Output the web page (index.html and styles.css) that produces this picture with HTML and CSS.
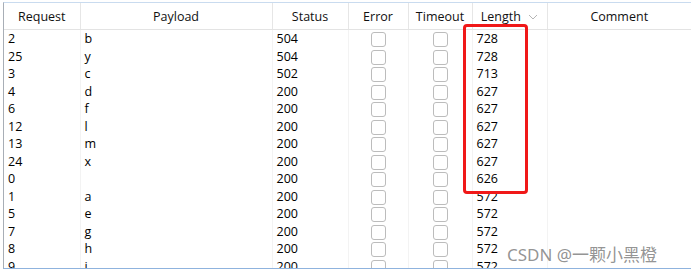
FILE: index.html
```html
<!DOCTYPE html>
<html lang="en">
<head>
    <meta charset="UTF-8">
    <title>Intruder results</title>
    <link rel="stylesheet" href="styles.css">
</head>
<body>
    <div class="results">
        <table class="grid">
            <colgroup>
                <col style="width: 76px">
                <col style="width: 192px">
                <col style="width: 76px">
                <col style="width: 60px">
                <col style="width: 64px">
                <col style="width: 75px">
                <col>
            </colgroup>
            <thead>
                <tr>
                    <th>Request</th>
                    <th>Payload</th>
                    <th>Status</th>
                    <th>Error</th>
                    <th>Timeout</th>
                    <th>Length <svg class="sort" width="10" height="6" viewBox="0 0 10 6"><path d="M1 1 L5 5 L9 1" fill="none" stroke="#b5b5b5" stroke-width="1"/></svg></th>
                    <th>Comment</th>
                </tr>
            </thead>
            <tbody>
                <tr><td>2</td><td>b</td><td>504</td><td class="chk"><span class="box"></span></td><td class="chk"><span class="box"></span></td><td>728</td><td></td></tr>
                <tr><td>25</td><td>y</td><td>504</td><td class="chk"><span class="box"></span></td><td class="chk"><span class="box"></span></td><td>728</td><td></td></tr>
                <tr><td>3</td><td>c</td><td>502</td><td class="chk"><span class="box"></span></td><td class="chk"><span class="box"></span></td><td>713</td><td></td></tr>
                <tr><td>4</td><td>d</td><td>200</td><td class="chk"><span class="box"></span></td><td class="chk"><span class="box"></span></td><td>627</td><td></td></tr>
                <tr><td>6</td><td>f</td><td>200</td><td class="chk"><span class="box"></span></td><td class="chk"><span class="box"></span></td><td>627</td><td></td></tr>
                <tr><td>12</td><td>l</td><td>200</td><td class="chk"><span class="box"></span></td><td class="chk"><span class="box"></span></td><td>627</td><td></td></tr>
                <tr><td>13</td><td>m</td><td>200</td><td class="chk"><span class="box"></span></td><td class="chk"><span class="box"></span></td><td>627</td><td></td></tr>
                <tr><td>24</td><td>x</td><td>200</td><td class="chk"><span class="box"></span></td><td class="chk"><span class="box"></span></td><td>627</td><td></td></tr>
                <tr><td>0</td><td></td><td>200</td><td class="chk"><span class="box"></span></td><td class="chk"><span class="box"></span></td><td>626</td><td></td></tr>
                <tr><td>1</td><td>a</td><td>200</td><td class="chk"><span class="box"></span></td><td class="chk"><span class="box"></span></td><td>572</td><td></td></tr>
                <tr><td>5</td><td>e</td><td>200</td><td class="chk"><span class="box"></span></td><td class="chk"><span class="box"></span></td><td>572</td><td></td></tr>
                <tr><td>7</td><td>g</td><td>200</td><td class="chk"><span class="box"></span></td><td class="chk"><span class="box"></span></td><td>572</td><td></td></tr>
                <tr><td>8</td><td>h</td><td>200</td><td class="chk"><span class="box"></span></td><td class="chk"><span class="box"></span></td><td>572</td><td></td></tr>
                <tr><td>9</td><td>i</td><td>200</td><td class="chk"><span class="box"></span></td><td class="chk"><span class="box"></span></td><td>572</td><td></td></tr>
            </tbody>
        </table>
        <div class="highlight"></div>
        <div class="watermark">CSDN @一颗小黑橙</div>
    </div>
</body>
</html>
```

FILE: styles.css
```css
body {
    margin: 0;
    padding-top: 2px;
    background: #ffffff;
    font-family: "Open Sans", "Noto Sans CJK SC", sans-serif;
    color: #000000;
}
.results {
    position: relative;
    margin-left: 3px;
    width: 687px;
    height: 265px;
    overflow: hidden;
    border-top: 1px solid #c9dbef;
    border-left: 1px solid #a8aeb6;
    border-bottom: 1px solid #8fb3de;
}
.grid {
    width: 100%;
    table-layout: fixed;
    border-collapse: collapse;
    font-size: 12.5px;
}
.grid th {
    height: 26px;
    padding: 0;
    font-weight: normal;
    font-size: 12.5px;
    text-align: center;
    color: #111111;
    border-right: 1px solid #e6e6e6;
    border-bottom: 1px solid #e3e3e3;
    white-space: nowrap;
}
.grid th:last-child {
    border-right: none;
}
.sort {
    margin-left: 4px;
    vertical-align: middle;
}
.grid td {
    height: 17.5px;
    padding: 0 0 0 4px;
    line-height: 17.5px;
    border-right: 1px solid #f3f3f3;
    white-space: nowrap;
}
.grid td:last-child {
    border-right: none;
}
.grid td.chk {
    padding: 0;
    text-align: center;
}
.box {
    display: inline-block;
    width: 15px;
    height: 15px;
    border: 1px solid #bcbcbc;
    border-radius: 3px;
    vertical-align: middle;
    box-sizing: border-box;
}
.highlight {
    position: absolute;
    left: 459px;
    top: 21px;
    width: 65px;
    height: 170px;
    border: 3px solid #f01818;
    border-radius: 4px;
    box-sizing: border-box;
}
.watermark {
    position: absolute;
    left: 503px;
    top: 238px;
    font-family: "Noto Sans", "Noto Sans CJK SC", sans-serif;
    font-size: 17px;
    color: rgba(120, 120, 120, 0.8);
    white-space: nowrap;
}
```
